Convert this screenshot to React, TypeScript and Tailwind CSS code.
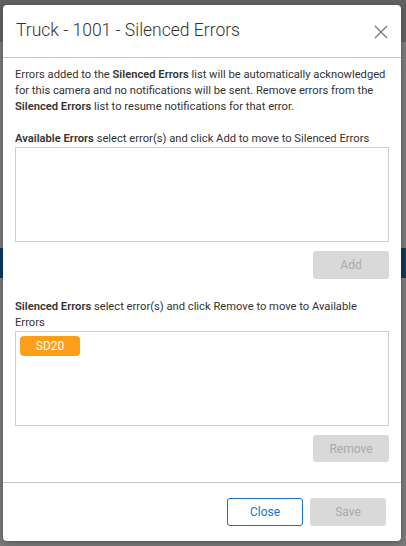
export default function App() {
  return (
    <div className="relative h-[546px] w-full overflow-hidden bg-[#7b7b7b] font-['Roboto',sans-serif]">
      {/* dimmed page behind the dialog */}
      <div className="flex flex-col">
        <div className="h-[42px] bg-[#616161]" />
        <div className="h-[206px]" />
        <div className="h-[30px] bg-[#0c3a5c]" />
      </div>

      <div className="absolute left-[3px] top-[5px] flex h-[536px] w-[398px] flex-col rounded-[4px] bg-white shadow-[0_2px_6px_rgba(0,0,0,0.3)]">
        <div className="flex h-[53px] shrink-0 items-center justify-between border-b border-[#c6c6c6] pl-[13px] pr-[13px]">
          <h1 className="text-[17.5px] font-light leading-none text-[#333]">Truck - 1001 - Silenced Errors</h1>
          <svg width="14" height="14" viewBox="0 0 14 14" className="mt-[1px]">
            <path d="M1 1 L13 13 M13 1 L1 13" stroke="#777" strokeWidth="1.3" fill="none" />
          </svg>
        </div>

        <div className="flex flex-1 flex-col px-[12px] pt-[9px] text-[11.2px] leading-[16px] text-[#333]">
          <p>
            Errors added to the <b className="font-semibold">Silenced Errors</b> list will be automatically acknowledged
            <br />
            for this camera and no notifications will be sent. Remove errors from the
            <br />
            <b className="font-semibold">Silenced Errors</b> list to resume notifications for that error.
          </p>

          <p className="mt-4">
            <b className="font-semibold">Available Errors</b> select error(s) and click Add to move to Silenced Errors
          </p>
          <div className="h-[95px] border border-[#cfcfcf]" />
          <div className="mt-[9px] flex justify-end">
            <button className="h-[28px] w-[76px] rounded-[3px] bg-[#d9d9d9] text-[12px] text-[#aaa]">Add</button>
          </div>

          <p className="mt-[20px]">
            <b className="font-semibold">Silenced Errors</b> select error(s) and click Remove to move to Available
            <br />
            Errors
          </p>
          <div className="h-[95px] border border-[#cfcfcf] p-[4px]">
            <div className="flex h-[20px] w-[60px] items-center justify-center rounded-[4px] bg-[#fa9f17] text-[12px] text-white">
              SD20
            </div>
          </div>
          <div className="mt-[9px] flex justify-end">
            <button className="h-[27px] w-[76px] rounded-[3px] bg-[#d9d9d9] text-[12px] text-[#aaa]">Remove</button>
          </div>
        </div>

        <div className="flex h-[59px] shrink-0 items-start justify-end gap-[7px] border-t border-[#c6c6c6] pr-[15px] pt-[15px]">
          <button className="h-[28px] w-[76px] rounded-[3px] border border-[#1a74b9] bg-white text-[12px] text-[#1a74b9]">
            Close
          </button>
          <button className="h-[28px] w-[76px] rounded-[3px] bg-[#d9d9d9] text-[12px] text-[#aaa]">Save</button>
        </div>
      </div>
    </div>
  );
}
